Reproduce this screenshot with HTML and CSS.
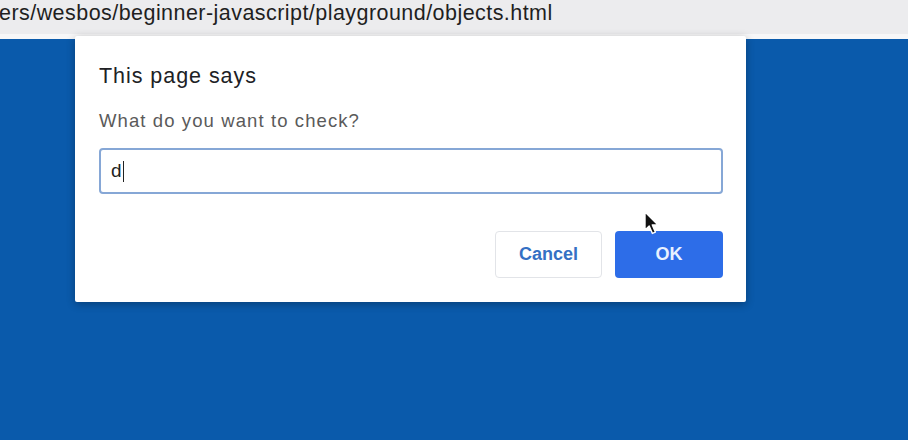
FILE: index.html
```html
<!DOCTYPE html>
<html>
<head>
<meta charset="utf-8">
<link rel="stylesheet" href="styles.css">
</head>
<body>
<div class="addressbar"><span class="url">ers/wesbos/beginner-javascript/playground/objects.html</span></div>
<div class="dialog">
  <div class="title">This page says</div>
  <div class="message">What do you want to check?</div>
  <div class="input"><span class="value">d</span><span class="caret"></span></div>
  <div class="buttons">
    <button class="btn cancel">Cancel</button>
    <button class="btn ok">OK</button>
  </div>
</div>
<svg class="pointer" width="16" height="26" viewBox="0 0 16 26">
  <path d="M1 1 L1 19 L5.2 15 L8.4 22.4 L11.4 21.1 L8.3 14 L14 14 Z" fill="#111" stroke="#fff" stroke-width="1.4" stroke-linejoin="round"/>
</svg>
</body>
</html>
```
FILE: styles.css
```css
html, body {
  margin: 0;
  padding: 0;
  height: 100%;
}
body {
  background: #0a5aab;
  font-family: "Liberation Sans", Arial, sans-serif;
  overflow: hidden;
  position: relative;
}
.addressbar {
  height: 39px;
  background: #ececee;
  border-bottom: 5px solid #f7f7f8;
  display: flex;
  align-items: flex-start;
  box-sizing: border-box;
}
.url {
  font-size: 21.5px;
  line-height: 26px;
  color: #1f1f1f;
  margin-left: -1px;
  letter-spacing: 0.45px;
}
.dialog {
  position: absolute;
  left: 75px;
  top: 36px;
  width: 671px;
  height: 266px;
  box-sizing: border-box;
  background: #fff;
  padding: 28px 23px 24px 24px;
  border-radius: 2px;
  box-shadow: 0 2px 8px rgba(0, 0, 0, 0.3);
  display: flex;
  flex-direction: column;
}
.title {
  font-size: 21.5px;
  line-height: 24px;
  color: #202124;
  letter-spacing: 0.95px;
}
.message {
  margin-top: 23px;
  font-size: 18.5px;
  line-height: 20px;
  color: #5a5a5a;
  letter-spacing: 1.1px;
}
.input {
  margin-top: 17px;
  height: 46px;
  box-sizing: border-box;
  border: 2px solid #86a7d6;
  border-radius: 4px;
  display: flex;
  align-items: center;
  padding-left: 10px;
}
.value {
  font-size: 19px;
  color: #222;
}
.caret {
  width: 1.5px;
  height: 21px;
  background: #222;
  margin-left: 1px;
}
.buttons {
  margin-top: 37px;
  display: flex;
  justify-content: flex-end;
  gap: 13px;
}
.btn {
  height: 47px;
  width: 108px;
  border-radius: 4px;
  font-family: "Liberation Sans", Arial, sans-serif;
  font-size: 18px;
  font-weight: bold;
  cursor: default;
}
.cancel {
  width: 107px;
  background: #fff;
  border: 1px solid #e2e4e8;
  color: #3470c4;
}
.ok {
  background: #2d6de8;
  border: none;
  color: #e9f2ff;
}
.pointer {
  position: absolute;
  left: 644px;
  top: 211px;
}
```
